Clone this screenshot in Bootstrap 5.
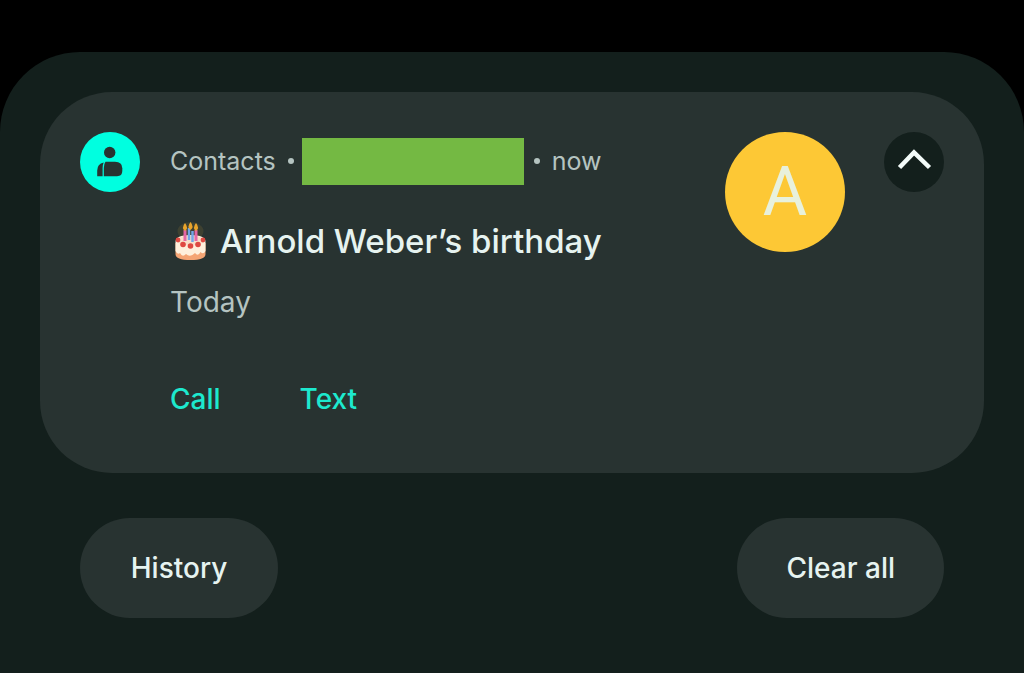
<!DOCTYPE html>
<html lang="en" data-bs-theme="dark">
<head>
<meta charset="utf-8">
<meta name="viewport" content="width=device-width, initial-scale=1">
<title>Notifications</title>
<link rel="stylesheet" href="https://cdn.jsdelivr.net/npm/bootstrap@5.3.0/dist/css/bootstrap.min.css">
<style>
  :root {
    --shade: #131f1c;
    --surface: #283331;
    --ink: #e6f3f0;
    --ink-soft: #b5c4c1;
    --accent: #1de9ce;
  }
  body { background: #000; color: var(--ink); font-family: Inter, Roboto, sans-serif; font-size: 28px; line-height: 60px; }
  .shade { background: var(--shade); border-radius: 80px 80px 0 0; padding: 40px; margin-top: 52px; }
  .notice { background: var(--surface); border-radius: 72px; padding: 40px 40px 44px; gap: 30px; }
  .round-60 { width: 60px; height: 60px; }
  .app-icon { background: #00ffe0; }
  .meta-line { color: var(--ink-soft); font-size: 25px; line-height: 58px; }
  .account { width: 222px; height: 47px; background: #74b943; margin: 0 10px 0 8px; }
  .dot { width: 6px; height: 6px; background: var(--ink-soft); }
  .gap-dot { margin-left: 12px; }
  .title-line { color: var(--ink); font-size: 33px; font-weight: 500; line-height: 60px; margin-top: 21px; gap: 10px; }
  .detail { color: var(--ink-soft); margin-top: 1px; }
  .actions { margin-top: 37px; gap: 79px; }
  .actions .btn { color: var(--accent); font-size: 28px; font-weight: 500; line-height: 60px; }
  .avatar { width: 120px; height: 120px; background: #fdc835; color: #e8f1dc; font-family: Roboto, sans-serif; font-size: 68px; margin-right: 9px; }
  .toggle { background: var(--shade); }
  .footer-row { padding: 0 40px; margin-top: 45px; }
  .footer-row .btn { background: var(--surface); color: var(--ink); font-size: 28px; font-weight: 500; line-height: 60px; padding: 20px 49px; min-width: 198px; }
</style>
</head>
<body class="d-flex flex-column min-vh-100">
<main class="shade flex-grow-1">
  <article class="notice d-flex align-items-start">
    <div class="app-icon round-60 rounded-circle flex-shrink-0">
      <svg class="d-block" width="60" height="60" viewBox="0 0 60 60" fill="#283331" aria-hidden="true">
        <circle cx="29.700" cy="20.500" r="5.700"/>
        <path d="M25.500 29.800H35q7.300 0 7.300 6.500v2.700q0 5.200-5.200 5.200H23.800V36q0-4 1.700-6.200z"/>
        <path d="M23.700 30.500q-6.500 1.300-6.500 8v5.700h5.400V36q0-3.200 1.100-5.500z"/>
      </svg>
    </div>
    <div class="flex-grow-1">
      <div class="meta-line d-flex align-items-center">
        <span>Contacts</span>
        <span class="dot gap-dot rounded-circle"></span>
        <span class="account"></span>
        <span class="dot rounded-circle"></span>
        <span class="gap-dot">now</span>
      </div>
      <h1 class="title-line d-flex align-items-center mb-0">
        <svg width="40" height="42" viewBox="0 0 40 42" role="img" aria-label="Birthday cake">
          <ellipse cx="20.500" cy="11" rx="13" ry="9" fill="#665c35" opacity=".35"/>
          <path d="M5.500 23v11q0 6 15 6t15-6V23z" fill="#f5a574"/>
          <path d="M5.500 22q0-7 15-7t15 7v9q-2 4-5 1-2.500 5-5.500 1-5 5-9 1-3.500 4-6-1-2.500 2-4.500-2z" fill="#fff0dc"/>
          <ellipse cx="20.500" cy="20.500" rx="13.500" ry="4.800" fill="#f8dfca"/>
          <path d="M15 10v11M26 10v11" stroke="#e667a5" stroke-width="3"/>
          <path d="M19 8v12M22.500 11v11" stroke="#72a6e8" stroke-width="2.500"/>
          <path d="M15 3q-4 5 0 8 4-3 0-8zM20.500 2q-4 5 0 8 4-3 0-8zM26 3q-4 5 0 8 4-3 0-8z" fill="#e9a42b"/>
          <g fill="#df4941"><circle cx="8" cy="20" r="2.400"/><circle cx="13" cy="24.500" r="2.800"/><circle cx="20.500" cy="26" r="2.800"/><circle cx="28" cy="24.500" r="2.800"/><circle cx="33" cy="20" r="2.400"/></g>
        </svg>
        <span>Arnold Weber’s birthday</span>
      </h1>
      <p class="detail mb-0">Today</p>
      <div class="actions d-flex">
        <button type="button" class="btn border-0 p-0">Call</button>
        <button type="button" class="btn border-0 p-0">Text</button>
      </div>
    </div>
    <div class="avatar rounded-circle flex-shrink-0 d-flex align-items-center justify-content-center">A</div>
    <button type="button" class="toggle btn round-60 rounded-circle border-0 p-0 flex-shrink-0" aria-label="Collapse notification">
      <svg class="d-block" width="60" height="60" viewBox="0 0 60 60" fill="none" stroke="#f3fbf9" stroke-width="4.500" aria-hidden="true"><path d="M15.500 35.500 30 20.500l15.500 15"/></svg>
    </button>
  </article>
  <div class="footer-row d-flex justify-content-between">
    <button type="button" class="btn border-0 rounded-pill">History</button>
    <button type="button" class="btn border-0 rounded-pill">Clear all</button>
  </div>
</main>
<script src="https://cdn.jsdelivr.net/npm/bootstrap@5.3.0/dist/js/bootstrap.bundle.min.js"></script>
</body>
</html>
